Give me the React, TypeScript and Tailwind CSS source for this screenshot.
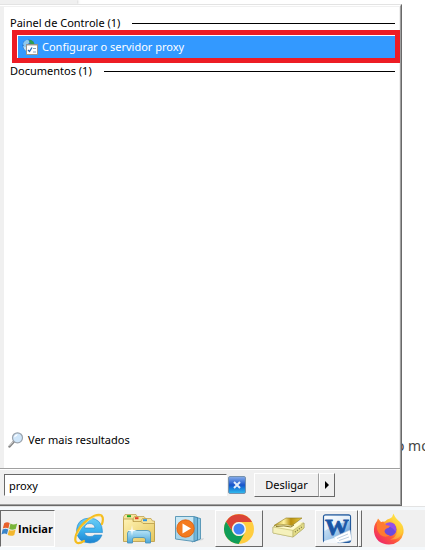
import type { ReactNode } from 'react';

const RAISED = 'border border-t-white border-l-white border-r-[#696969] border-b-[#696969]';

const ProxyIcon = () => (
	<svg width="16" height="16" viewBox="0 0 16 16" aria-hidden="true">
		<circle cx="6.500" cy="6.500" r="6" fill="#2a6fc0" />
		<path d="M1 5 Q2 1 6 .8 L8 3 L5 6 L3 9 Z" fill="#8fc9ee" />
		<path d="M8 .8 Q12.500 2 12.500 6 L9 5 L7 3Z" fill="#2f9e4f" />
		<path d="M1 7 L4 8 L4 12 Q1.500 10.500 1 7Z" fill="#b9dff5" />
		<rect x="4.500" y="5.500" width="11" height="10" fill="#fff" stroke="#9a958c" />
		<path d="M5 6.500H15" stroke="#d8d4cc" />
		<path d="M6 11 L7.500 12.500 L10 8.500" fill="none" stroke="#2568b5" strokeWidth="1.300" />
		<path d="M11 9.500H14M11 13H14" stroke="#8b9db5" />
	</svg>
);

const SearchIcon = () => (
	<svg width="16" height="16" viewBox="0 0 16 16" aria-hidden="true">
		<path d="M6 9.500 L1.500 14.500" stroke="#858585" strokeWidth="2.400" strokeLinecap="round" />
		<path d="M5.500 9.500 L1.300 14" stroke="#d0d0d0" strokeWidth="1" />
		<circle cx="9.500" cy="5.800" r="5" fill="#cfe6fa" stroke="#9aa3ad" strokeWidth="1.200" />
		<path d="M6 5.500 Q6.500 2.500 10 2.300 Q8.500 5 6 5.500Z" fill="#fff" />
	</svg>
);

const WindowsFlag = () => (
	<svg className="shrink-0" width="17" height="16" viewBox="0 0 16 16" aria-hidden="true">
		<path d="M2.700 2.300 Q5.400 .5 8.200 2.100 L6.900 7.500 Q4.200 6 1.300 7.600Z" fill="#e8622c" />
		<path d="M9 2.600 Q12 4.400 15.700 2.400 L14.300 7.700 Q11 9.500 7.700 8Z" fill="#79b539" />
		<path d="M1.100 8.500 Q4 7 6.700 8.400 L5.500 13.200 Q3 11.700 0 13.500Z" fill="#3a84c9" />
		<path d="M7.500 8.900 Q10.800 10.400 14.100 8.500 L12.800 13.900 Q9.700 15.600 6.200 14Z" fill="#f3b72d" />
	</svg>
);

const ExplorerLogo = () => (
	<svg width="32" height="32" viewBox="0 0 32 32" aria-hidden="true">
		<defs>
			<linearGradient id="ie" x1="0" y1="0" x2="0" y2="1">
				<stop offset="0" stopColor="#6ccdf5" />
				<stop offset=".5" stopColor="#3cb2ee" />
				<stop offset="1" stopColor="#1b82d0" />
			</linearGradient>
		</defs>
		<path
			d="M29.500 19.500 H11.500 Q12 23.500 17 23.500 Q20 23.500 21.500 22 H29 Q26 30 17 30 Q4 29.500 3.500 17.500 Q4 5.500 16.500 5 Q29.500 5.500 29.500 19.500Z M11.500 15 H22 Q21.500 10.500 16.600 10.500 Q12 10.500 11.500 15Z"
			fill="url(#ie)"
			fillRule="evenodd"
			stroke="#2588cb"
			strokeWidth=".6"
		/>
		<path
			d="M29 11 Q31 5 28.500 2.500 Q24 .5 16 6 Q6 13 3 22 Q1 29 4.500 30 Q7 30.500 11 28"
			fill="none"
			stroke="#f5bd1f"
			strokeWidth="2.200"
			strokeLinecap="round"
		/>
		<path d="M28 3 Q23 2 16 7 Q7 14 4 22" fill="none" stroke="#ffe27a" strokeWidth=".8" />
	</svg>
);

const FolderLogo = () => (
	<svg width="34" height="32" viewBox="0 0 34 32" aria-hidden="true">
		<defs>
			<linearGradient id="folder" x1="0" y1="0" x2="1" y2="1">
				<stop offset="0" stopColor="#fff3b4" />
				<stop offset="1" stopColor="#e5c65c" />
			</linearGradient>
			<linearGradient id="stand" x1="0" y1="0" x2="0" y2="1">
				<stop offset="0" stopColor="#b6e3f7" />
				<stop offset="1" stopColor="#4ea7d8" />
			</linearGradient>
		</defs>
		<g fill="#f6e49c" stroke="#b99a45" strokeWidth=".7">
			<path d="M1.500 27 V4 L3 1.500 H14 L15.500 4 H18 V27Z" />
			<path d="M11 27 V6 L12.500 3.500 H22 L24 6 H25 V27Z" />
			<path d="M19 27 V8 L20.500 5.500 H29 L30.500 8 H32.500 V27Z" />
		</g>
		<path d="M5 3.200H9" stroke="#1fa51f" strokeWidth="2" />
		<path d="M13 5.200H16.500" stroke="#e33c22" strokeWidth="2" />
		<path d="M21 7.200H25" stroke="#2b93e5" strokeWidth="2" />
		<path d="M1.500 6H11V8.500H19L21 10.500H32.500V28.500H1.500Z" fill="url(#folder)" stroke="#b99a45" strokeWidth=".8" />
		<path
			d="M5.500 30 V20 Q6 17.500 9 17.500 H25 Q28.500 17.500 28.500 20 V30 H23.500 V26 Q23 24.500 21 24.500 H13 Q10.500 24.500 10.500 26 V30Z"
			fill="url(#stand)"
			stroke="#438fba"
			strokeWidth=".8"
		/>
		<path d="M10 12 L10.700 16.800 L15 17.500 L10.700 18.200 L10 23 L9.300 18.200 L5 17.500 L9.300 16.800Z" fill="#fff" />
	</svg>
);

const PlayerLogo = () => (
	<svg width="32" height="30" viewBox="0 0 32 30" aria-hidden="true">
		<path d="M20 26 L30 24 L29 26 L18 28Z" fill="#d2d7da" />
		<path d="M20 3 L26.500 4.500 V25 L20 27.500Z" fill="#8ec9e7" stroke="#4389ac" strokeWidth=".8" />
		<path d="M19 2.500 L23.500 3.500 V26 L18 28Z" fill="#70b5da" stroke="#397fa6" strokeWidth=".8" />
		<path d="M1.500 2.500 H20 V27.500 L1.500 25Z" fill="#a8d5ea" stroke="#5f9bb9" />
		<path d="M2 3 H19 V10 L2 16Z" fill="#c9e8f5" />
		<circle cx="11.500" cy="14.500" r="8.700" fill="#f47b20" stroke="#d95c0b" strokeWidth=".8" />
		<path d="M8.500 9.500 L17 14.500 L8.500 19.500Z" fill="#fff" />
	</svg>
);

const ChromeLogo = () => (
	<svg width="30" height="30" viewBox="0 0 30 30" aria-hidden="true">
		<circle cx="15" cy="15" r="15" fill="#ffcd40" />
		<path d="M2 7.500 A15 15 0 0 1 28 8 H15 A7 7 0 0 0 8.900 18.500Z" fill="#db4437" />
		<path d="M2 7.500 L8.900 18.500 A7 7 0 0 0 21.100 18.500 L14.600 30 A15 15 0 0 1 2 7.500Z" fill="#0f9d58" />
		<circle cx="15" cy="15" r="7" fill="#f4f4f4" />
		<circle cx="15" cy="15" r="5.500" fill="#4285f4" />
	</svg>
);

const ScannerLogo = () => (
	<svg width="34" height="24" viewBox="0 0 34 24" aria-hidden="true">
		<defs>
			<linearGradient id="lid" x1="0" y1="0" x2="1" y2="0">
				<stop offset="0" stopColor="#b8981c" />
				<stop offset=".35" stopColor="#fff3a0" />
				<stop offset=".6" stopColor="#b98f10" />
				<stop offset="1" stopColor="#e6c944" />
			</linearGradient>
		</defs>
		<path d="M1 10 L9 6 L32 6 L32 11 L21 20 L1 16Z" fill="#f2edaa" stroke="#a9a35a" strokeWidth=".6" />
		<path d="M1 10 L21 13.500 V20 L1 16Z" fill="#f5f1bb" stroke="#b5af68" strokeWidth=".5" />
		<path d="M21 13.500 L32 6 V11 L21 20Z" fill="#e2db87" stroke="#a9a35a" strokeWidth=".5" />
		<path d="M23 15 L31 9" stroke="#77733c" strokeWidth="1.200" strokeDasharray="1 1.500" />
		<path d="M3 9.500 L12 5 H31 L21 12.500Z" fill="#fffbd0" />
		<path d="M2 8.500 L14 1 H30 L20 8.500 Q11 6.500 2 8.500Z" fill="url(#lid)" stroke="#927d1c" strokeWidth=".6" />
		<path d="M4 9.500 Q12 8 19 10 L22 8" fill="none" stroke="#7c6a18" strokeWidth=".9" />
	</svg>
);

const WordLogo = () => (
	<svg width="30" height="30" viewBox="0 0 30 30" aria-hidden="true">
		<defs>
			<linearGradient id="word" x1="0" y1="0" x2="1" y2="1">
				<stop offset="0" stopColor="#eef7fd" />
				<stop offset=".6" stopColor="#9bc3e8" />
				<stop offset="1" stopColor="#3f7cc0" />
			</linearGradient>
		</defs>
		<rect x="1.500" y=".8" width="27" height="27.500" rx="2" fill="url(#word)" stroke="#245a9c" strokeWidth="1.200" />
		<path d="M2.500 2 H28 V7 Q14 9 2.500 17Z" fill="#fff" opacity=".7" />
		<text
			x="3"
			y="21"
			fontSize="24"
			fontWeight="700"
			fontFamily="Liberation Serif, serif"
			fill="#1a56a5"
			stroke="#1a56a5"
			strokeWidth=".8"
		>
			W
		</text>
		<path d="M12 23 L28 16 L30 26 L18 29 L12 28Z" fill="#fff" stroke="#a9c2dc" strokeWidth=".6" />
		<path d="M2 27 L12 24 L16 29 L2 29Z" fill="#f5f9fd" />
		<path d="M15 24.500 L26 20 M17 26.500 L27 23" stroke="#bfd0e2" />
	</svg>
);

const FirefoxLogo = () => (
	<svg width="32" height="32" viewBox="0 0 32 32" aria-hidden="true">
		<defs>
			<linearGradient id="fox" x1=".85" y1=".1" x2=".2" y2=".9">
				<stop offset="0" stopColor="#fff050" />
				<stop offset=".35" stopColor="#ffbd2e" />
				<stop offset=".65" stopColor="#ff5b38" />
				<stop offset="1" stopColor="#f02d66" />
			</linearGradient>
		</defs>
		<path
			d="M20.500 .5 Q22 5 27 9 Q31.500 14 30.500 20 Q28 31 16 31.500 Q3 31 1 19 Q.5 12 4 8 L5 5.500 L8 9 L12 8.500 Q14 6 17 5.500 Q20 4 20.500 .5Z"
			fill="url(#fox)"
		/>
		<circle cx="17" cy="16.500" r="6.500" fill="#6d4bdd" />
		<path d="M12 11 Q17 7.500 21.500 11 Q24 15 22.500 19 Q20 14 15 13.500Z" fill="#9650e8" />
		<path d="M4.500 9 Q8 10 10 8.500 Q11 11 13 12 L17 13 Q16 15 13.500 15.500 Q11.500 16.500 11.500 18.500 Q12.500 22 17 22.500 Q12 25 7.500 22 Q2 16 4.500 9Z" fill="#ff7a32" />
		<path d="M20.500 1 Q18 5.500 20 9 Q25.500 13 24 20 Q22 25 17 26.500 Q26 27.500 29 20 Q30 13 25 9 Q21 5 20.500 1Z" fill="#ffd83d" opacity=".5" />
	</svg>
);

const GroupHeading = ({ children }: { children: ReactNode }) => (
	<h2 className="flex h-4 items-center gap-3 pr-1 pl-1.5">
		<span className="whitespace-nowrap">{children}</span>
		<span className="h-px flex-1 bg-black" />
	</h2>
);

const StartMenu = () => (
	<section className="flex min-w-0 flex-1 flex-col border-t border-r border-b border-t-[#e3e3e3] border-r-[#696969] border-b-[#696969] bg-[#f0f0f0]">
		<div className="flex flex-1 flex-col border-t border-r border-b border-t-white border-r-[#a0a0a0] border-b-[#a0a0a0]">
			<div className="ml-1 flex flex-1 flex-col border-t border-r border-[#f0f0f0] bg-white pt-2">
				<GroupHeading>Painel de Controle (1)</GroupHeading>
				<button
					type="button"
					className="-mt-px -mr-px ml-2 flex h-[33px] items-center border-[5px] border-[#ed1c24] bg-white pt-px pl-px text-left text-white"
				>
					<span className="flex h-full w-full items-center gap-1 bg-[#3399ff] pl-1">
						<ProxyIcon />
						Configurar o servidor proxy
					</span>
				</button>
				<GroupHeading>Documentos (1)</GroupHeading>
				<a href="#resultados" className="mt-auto mb-5 flex items-center gap-1 pl-1">
					<SearchIcon />
					Ver mais resultados
				</a>
			</div>
			<form
				className="flex items-center border-t border-[#a0a0a0] pt-1 pb-[7px] pl-1 shadow-[inset_0_1px_#fff]"
				onSubmit={(e) => e.preventDefault()}
			>
				<input
					type="text"
					aria-label="Pesquisar"
					defaultValue="proxy"
					className="h-[22px] w-[223px] border border-t-[#696969] border-r-white border-b-white border-l-[#696969] bg-white px-1 outline-none"
				/>
				<button
					type="button"
					aria-label="Limpar"
					className="ml-px flex size-[18px] items-center justify-center rounded-xs border border-[#7591ad] bg-linear-to-b from-[#82a9e8] via-[#1853cb] to-[#31b7ec]"
				>
					<svg width="8" height="8" viewBox="0 0 8 8">
						<path d="M1 1L7 7M7 1L1 7" stroke="#e4eefb" strokeWidth="2" />
					</svg>
				</button>
				<button type="button" className="ml-2 h-6 w-[65px] border border-t-white border-r-[#a0a0a0] border-b-[#696969] border-l-white">
					Desligar
				</button>
				<button type="button" aria-label="Mais opções" className={`flex h-6 w-4 items-center justify-center ${RAISED}`}>
					<svg width="4" height="8" viewBox="0 0 4 8">
						<path d="M0 0L4 4L0 8Z" />
					</svg>
				</button>
			</form>
		</div>
	</section>
);

const Taskbar = () => (
	<nav className="border-t border-[#e3e3e3] bg-[#f5f9fc] py-[3px]">
		<div className="flex h-[37px] items-center bg-[#f0f0f0]">
			<button
				type="button"
				className="flex h-full w-[55px] items-center border border-t-[#696969] border-r-white border-b-white border-l-[#696969] font-['Open_Sans','Noto_Sans',sans-serif] font-bold"
			>
				<WindowsFlag />
				Iniciar
			</button>
			<button type="button" aria-label="Internet Explorer" className="ml-[18px]"><ExplorerLogo /></button>
			<button type="button" aria-label="Windows Explorer" className="ml-[17px]"><FolderLogo /></button>
			<button type="button" aria-label="Media Player" className="ml-[18px]"><PlayerLogo /></button>
			<button type="button" aria-label="Chrome" className={`ml-[9px] flex h-full w-12 items-center justify-center ${RAISED}`}>
				<ChromeLogo />
			</button>
			<button type="button" aria-label="Scanner" className="ml-[9px]"><ScannerLogo /></button>
			<button type="button" aria-label="Word" className={`ml-[9px] flex h-full w-[43px] items-center justify-center ${RAISED}`}>
				<WordLogo />
			</button>
			<span className={`h-full w-1 ${RAISED}`} />
			<button type="button" aria-label="Firefox" className="ml-[11px]"><FirefoxLogo /></button>
		</div>
	</nav>
);

export default function App() {
	return (
		<div className="flex min-h-screen flex-col overflow-hidden bg-white font-['Noto_Sans','Open_Sans',sans-serif] text-[11px] leading-4 text-black">
			<div className="flex h-1">
				<div className="w-[77px] bg-[#f0f0f0] shadow-[1px_0_3px_#0003]" />
			</div>
			<main className="flex flex-1">
				<StartMenu />
				{/* page behind the menu */}
				<div className="flex w-[23px] flex-col justify-end overflow-hidden pb-[50px] text-[14px] leading-5 text-[#444]">
					<p className="-ml-1.5 whitespace-nowrap">o mo</p>
				</div>
			</main>
			<Taskbar />
		</div>
	);
}
